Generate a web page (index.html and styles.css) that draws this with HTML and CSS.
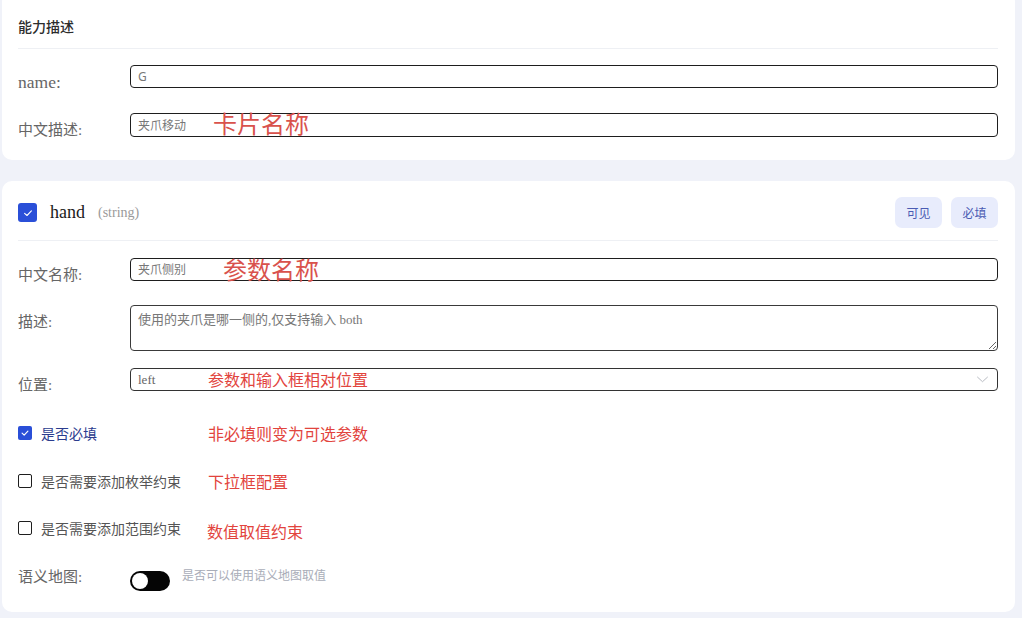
FILE: index.html
```html
<!DOCTYPE html>
<html lang="zh">
<head>
<meta charset="utf-8">
<title>能力描述</title>
<link rel="stylesheet" href="styles.css">
</head>
<body>
<div class="page">
  <section class="card card-top">
    <div class="card-title">能力描述</div>
    <div class="row first">
      <label class="label latin">name:</label>
      <div class="field"><input class="input sans" placeholder="G"></div>
    </div>
    <div class="row gap25">
      <label class="label">中文描述:</label>
      <div class="field">
        <input class="input sans" placeholder="夹爪移动">
        <span class="note big note-card">卡片名称</span>
      </div>
    </div>
  </section>

  <section class="card card-param">
    <div class="param-head">
      <span class="check big-check"><svg viewBox="0 0 12 12" width="12" height="12"><path d="M2.6 6.3 L5 8.5 L9.4 3.9" fill="none" stroke="#fff" stroke-width="1.1" stroke-linecap="round" stroke-linejoin="round"/></svg></span>
      <span class="param-name">hand</span>
      <span class="param-type">(string)</span>
      <div class="head-actions">
        <button class="pill">可见</button>
        <button class="pill">必填</button>
      </div>
    </div>
    <div class="row first2">
      <label class="label">中文名称:</label>
      <div class="field">
        <input class="input sans" placeholder="夹爪侧别">
        <span class="note big note-param">参数名称</span>
      </div>
    </div>
    <div class="row gap24">
      <label class="label">描述:</label>
      <div class="field"><textarea class="input area" placeholder="使用的夹爪是哪一侧的,仅支持输入 both"></textarea></div>
    </div>
    <div class="row gap17">
      <label class="label">位置:</label>
      <div class="field">
        <div class="input select">
          <span>left</span>
          <svg class="chev" viewBox="0 0 14 8" width="13" height="7"><path d="M1 1 L7 6.5 L13 1" fill="none" stroke="#b5b8bf" stroke-width="1.1"/></svg>
        </div>
        <span class="note note-pos">参数和输入框相对位置</span>
      </div>
    </div>

    <div class="crow c1">
      <div class="cbox">
        <span class="check small-check"><svg viewBox="0 0 12 12" width="10" height="10"><path d="M2.5 6.2 L5 8.5 L9.5 3.8" fill="none" stroke="#fff" stroke-width="1.4" stroke-linecap="round" stroke-linejoin="round"/></svg></span>
        <span class="ctext on">是否必填</span>
      </div>
      <span class="note">非必填则变为可选参数</span>
    </div>
    <div class="crow c2">
      <div class="cbox">
        <span class="check empty"></span>
        <span class="ctext">是否需要添加枚举约束</span>
      </div>
      <span class="note">下拉框配置</span>
    </div>
    <div class="crow c3">
      <div class="cbox">
        <span class="check empty"></span>
        <span class="ctext">是否需要添加范围约束</span>
      </div>
      <span class="note low">数值取值约束</span>
    </div>

    <div class="trow">
      <label class="label">语义地图:</label>
      <span class="toggle"><span class="knob"></span></span>
      <span class="hint">是否可以使用语义地图取值</span>
    </div>
  </section>
</div>
</body>
</html>
```

FILE: styles.css
```css
* { box-sizing: border-box; }
html, body { margin: 0; padding: 0; }
body {
  background: #f0f2f9;
  width: 1022px;
  height: 618px;
  overflow: hidden;
  font-family: "Liberation Serif", "Noto Sans CJK SC", serif;
}
.page {
  padding: 0 7px 0 2px;
}
.card {
  background: #fff;
  border-radius: 10px;
  padding: 0 17px 0 16px;
}
.card-top {
  margin-top: -8px;
  padding-bottom: 23px;
}
.card-param {
  margin-top: 21px;
}
.card-title {
  padding-top: 24px;
  padding-bottom: 12px;
  font-family: "Noto Sans CJK SC", sans-serif;
  font-size: 14px;
  line-height: 20px;
  color: #2c2c2c;
  font-weight: 500;
  border-bottom: 1px solid #eef0f4;
}
.row {
  display: flex;
  align-items: flex-start;
}
.row.first { margin-top: 16px; }
.row.first2 { margin-top: 17px; }
.row.gap25 { margin-top: 25px; }
.row.gap24 { margin-top: 24px; }
.row.gap17 { margin-top: 17px; }
.label {
  width: 112px;
  flex: none;
  padding-top: 6px;
  margin-bottom: -10px;
  font-size: 15px;
  line-height: 22px;
  color: #666;
}
.label.latin { font-size: 17.5px; }
.field {
  flex: 1;
  position: relative;
}
.input {
  display: block;
  width: 100%;
  height: 23px;
  border: 1.5px solid #1e1e1e;
  border-radius: 4px;
  padding: 0 7px;
  font-family: "Liberation Serif", "Noto Sans CJK SC", serif;
  font-size: 12.5px;
  color: #333;
  background: #fff;
  outline: none;
}
.input.sans { font-family: "Noto Sans", "Noto Sans CJK SC", sans-serif; font-size: 12px; }
.row.gap25 .input { height: 24px; }
.input::placeholder { color: #777; }
.area {
  height: 46px;
  padding-top: 6px;
  resize: vertical;
  border-color: #3a3a3a;
  line-height: 16px;
  font-size: 13px;
}
.select {
  display: flex;
  align-items: center;
  justify-content: space-between;
  color: #666;
  border-color: #333;
  padding-right: 8px;
  font-size: 13px;
}
.chev { display: block; }
.note {
  font-family: "Noto Sans CJK SC", sans-serif;
  color: #e2443d;
  font-size: 16px;
  line-height: 20px;
  white-space: nowrap;
}
.note.big {
  font-size: 24px;
  line-height: 26px;
  color: #d9524c;
}
.note-card {
  position: absolute;
  left: 83px;
  top: -3px;
}
.note-param {
  position: absolute;
  left: 93px;
  top: -2px;
}
.note-pos {
  position: absolute;
  left: 78px;
  top: 1px;
}
.param-head {
  display: flex;
  align-items: center;
  padding-top: 16px;
  padding-bottom: 12px;
  border-bottom: 1px solid #eef0f4;
}
.check {
  display: inline-flex;
  align-items: center;
  justify-content: center;
  flex: none;
}
.big-check {
  width: 19px;
  height: 19px;
  border-radius: 3px;
  background: #2a4fd8;
}
.param-name {
  margin-left: 13px;
  font-size: 18px;
  color: #1a1a1a;
}
.param-type {
  margin-left: 13px;
  font-size: 14px;
  color: #9a9a9a;
}
.head-actions {
  margin-left: auto;
  display: flex;
  gap: 9px;
}
.pill {
  width: 47px;
  height: 31px;
  border: none;
  border-radius: 7px;
  background: #e8ecfc;
  color: #4a5bb3;
  font-family: "Noto Sans CJK SC", sans-serif;
  font-size: 12px;
  padding: 0;
}
.crow {
  display: flex;
  align-items: center;
  height: 20px;
}
.crow.c1 { margin-top: 32px; }
.crow.c2 { margin-top: 28px; }
.crow.c3 { margin-top: 27px; }
.cbox {
  width: 190px;
  display: flex;
  align-items: center;
}
.small-check {
  width: 14px;
  height: 14px;
  border-radius: 2px;
  background: #2a4fd8;
}
.empty {
  width: 14px;
  height: 14px;
  border: 1.5px solid #1e1e1e;
  border-radius: 2px;
  background: #fff;
}
.ctext {
  margin-left: 9px;
  font-size: 14px;
  color: #555;
}
.ctext.on { color: #2b3c8e; }
.note.low { position: relative; top: 3px; margin-left: -1px; }
.trow {
  display: flex;
  align-items: flex-start;
  margin-top: 28px;
  padding-bottom: 21px;
}
.trow .label { margin-bottom: 0; padding-top: 0; }
.toggle {
  margin-top: 5px;
  width: 40px;
  height: 20px;
  border-radius: 10px;
  background: #050505;
  display: flex;
  align-items: center;
  padding-left: 2px;
  flex: none;
}
.knob {
  width: 16px;
  height: 16px;
  border-radius: 50%;
  background: #fff;
}
.hint {
  margin-left: 12px;
  font-family: "Noto Sans CJK SC", sans-serif;
  font-size: 12px;
  line-height: 18px;
  color: #a9adb8;
}
```
